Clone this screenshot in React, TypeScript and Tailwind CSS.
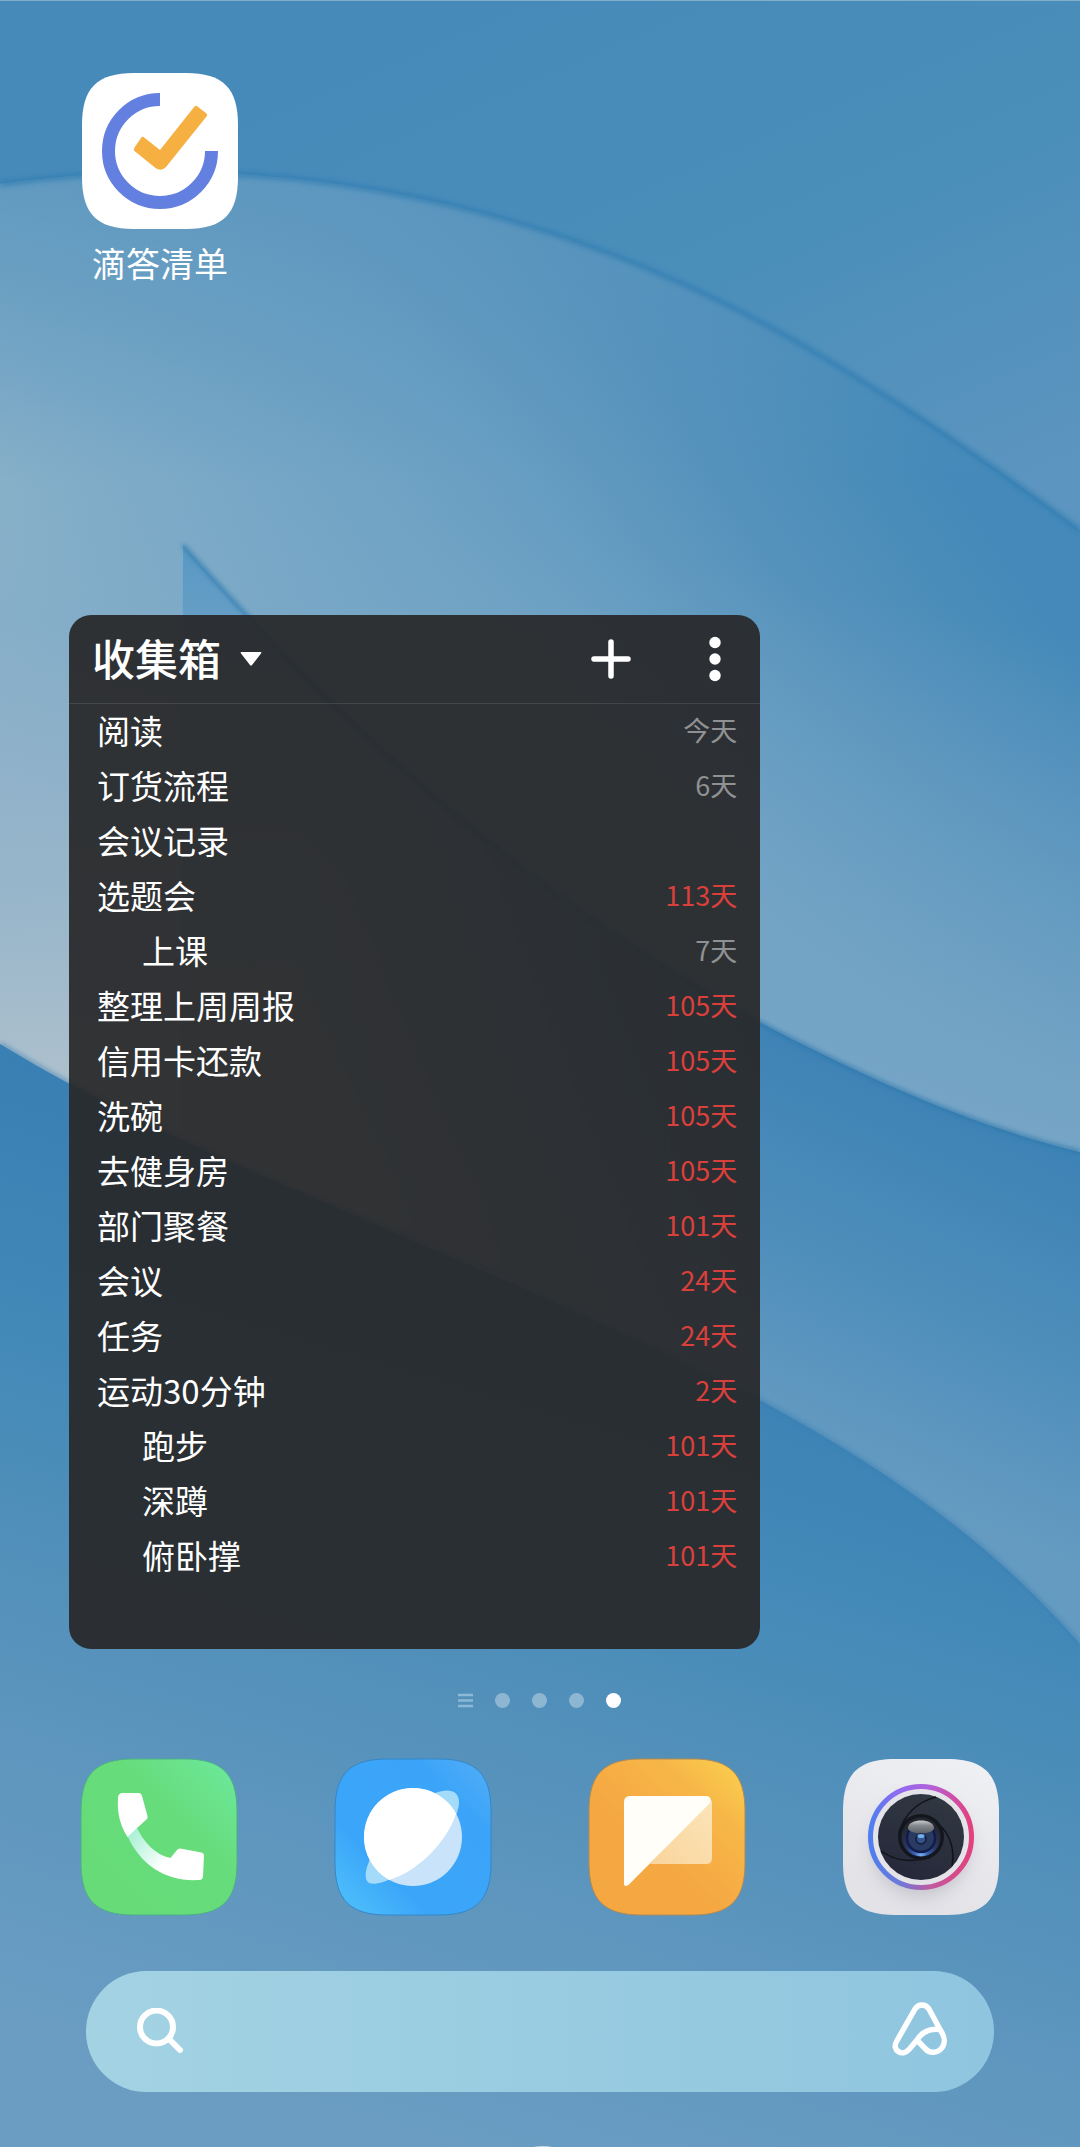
import type { ReactNode } from "react";

type Task = { title: string; due?: string; tone?: "muted" | "late"; child?: boolean };

const tasks: Task[] = [
  { title: "阅读", due: "今天", tone: "muted" },
  { title: "订货流程", due: "6天", tone: "muted" },
  { title: "会议记录" },
  { title: "选题会", due: "113天", tone: "late" },
  { title: "上课", due: "7天", tone: "muted", child: true },
  { title: "整理上周周报", due: "105天", tone: "late" },
  { title: "信用卡还款", due: "105天", tone: "late" },
  { title: "洗碗", due: "105天", tone: "late" },
  { title: "去健身房", due: "105天", tone: "late" },
  { title: "部门聚餐", due: "101天", tone: "late" },
  { title: "会议", due: "24天", tone: "late" },
  { title: "任务", due: "24天", tone: "late" },
  { title: "运动30分钟", due: "2天", tone: "late" },
  { title: "跑步", due: "101天", tone: "late", child: true },
  { title: "深蹲", due: "101天", tone: "late", child: true },
  { title: "俯卧撑", due: "101天", tone: "late", child: true },
];

const tile =
  "M0 52C0 15 15 0 52 0H104C141 0 156 15 156 52V104C156 141 141 156 104 156H52C15 156 0 141 0 104Z";

function Wallpaper() {
  const ridge = "M0 184C260 148 560 190 861 380C940 428 1010 478 1080 530";
  const horn = "M183 545C330 710 500 880 759 1022C870 1080 970 1125 1080 1152";
  const dune = "M0 1044C150 1135 300 1190 413 1241C530 1290 650 1345 758 1399C880 1465 990 1540 1080 1644";
  return (
    <svg
      className="absolute inset-0 -z-10 h-full w-full"
      viewBox="0 0 1080 2147"
      preserveAspectRatio="none"
      aria-hidden="true"
    >
      <defs>
        <linearGradient id="sky" gradientUnits="userSpaceOnUse" x1="500" y1="0" x2="760" y2="600">
          <stop offset="0" stopColor="#468ab9" />
          <stop offset="0.5" stopColor="#4a8eba" />
          <stop offset="1" stopColor="#5c95bf" />
        </linearGradient>
        <linearGradient id="band" gradientUnits="userSpaceOnUse" x1="60" y1="880" x2="860" y2="340">
          <stop offset="0" stopColor="#9ab8cb" />
          <stop offset="0.3" stopColor="#7dabc7" />
          <stop offset="0.6" stopColor="#6a9fc3" />
          <stop offset="0.8" stopColor="#5592bb" />
          <stop offset="1" stopColor="#4489b9" />
        </linearGradient>
        <linearGradient id="bandTop" gradientUnits="userSpaceOnUse" x1="0" y1="170" x2="0" y2="480">
          <stop offset="0" stopColor="#5a95be" stopOpacity="0.8" />
          <stop offset="1" stopColor="#5a95be" stopOpacity="0" />
        </linearGradient>
        <linearGradient id="bandLow" gradientUnits="userSpaceOnUse" x1="900" y1="600" x2="800" y2="1100">
          <stop offset="0" stopColor="#76a5c6" stopOpacity="0" />
          <stop offset="1" stopColor="#76a5c6" />
        </linearGradient>
        <linearGradient id="hornFill" gradientUnits="userSpaceOnUse" x1="180" y1="545" x2="180" y2="1200">
          <stop offset="0" stopColor="#5998c4" />
          <stop offset="0.5" stopColor="#8eb2c9" />
          <stop offset="1" stopColor="#a6b8c5" />
        </linearGradient>
        <linearGradient id="shade" gradientUnits="userSpaceOnUse" x1="1000" y1="1130" x2="850" y2="1470">
          <stop offset="0" stopColor="#3e83b5" />
          <stop offset="0.5" stopColor="#4e8ebb" />
          <stop offset="1" stopColor="#659bc1" />
        </linearGradient>
        <linearGradient id="fade" gradientUnits="userSpaceOnUse" x1="300" y1="0" x2="759" y2="0">
          <stop offset="0" stopColor="#fff" stopOpacity="0" />
          <stop offset="1" stopColor="#fff" />
        </linearGradient>
        <mask id="fadeMask" maskUnits="userSpaceOnUse" x="0" y="0" width="1080" height="2147">
          <rect width="1080" height="2147" fill="url(#fade)" />
        </mask>
        <linearGradient id="floor" gradientUnits="userSpaceOnUse" x1="680" y1="1290" x2="420" y2="2147">
          <stop offset="0" stopColor="#3a80b3" />
          <stop offset="0.25" stopColor="#4289b8" />
          <stop offset="0.5" stopColor="#5290ba" />
          <stop offset="0.75" stopColor="#6097bf" />
          <stop offset="1" stopColor="#6b9dc2" />
        </linearGradient>
        <linearGradient id="pale" gradientUnits="userSpaceOnUse" x1="0" y1="620" x2="0" y2="1080">
          <stop offset="0" stopColor="#adc0cd" stopOpacity="0" />
          <stop offset="1" stopColor="#adc0cd" />
        </linearGradient>
        <filter id="soft" x="-5%" y="-5%" width="110%" height="110%">
          <feGaussianBlur stdDeviation="2" />
        </filter>
      </defs>
      <rect width="1080" height="2147" fill="url(#sky)" />
      <path d={ridge + "V1500H0Z"} fill="url(#band)" />
      <path d={ridge + "V1500H0Z"} fill="url(#bandTop)" />
      <path d={ridge + "V1500H0Z"} fill="url(#bandLow)" />
      <path d={ridge} fill="none" stroke="#2e7ab0" strokeOpacity="0.6" strokeWidth="6" filter="url(#soft)" />
      <rect y="620" width="182" height="520" fill="url(#pale)" />
      <path d={horn + "V1700H180Z"} fill="url(#hornFill)" />
      <path d={horn + "V1700H180Z"} fill="url(#shade)" mask="url(#fadeMask)" />
      <path d={horn} fill="none" stroke="#2a75ab" strokeOpacity="0.7" strokeWidth="4" filter="url(#soft)" />
      <path d={dune + "V2147H0Z"} fill="url(#floor)" />
      <path d={dune} fill="none" stroke="#3a80b3" strokeOpacity="0.5" strokeWidth="5" filter="url(#soft)" />
      <rect width="1080" height="1" fill="#82aecb" />
      <ellipse cx="543" cy="2149" rx="13" ry="3" fill="#c4d9e7" />
    </svg>
  );
}

function AppTile({ label, children }: { label: string; children: ReactNode }) {
  return (
    <button type="button" aria-label={label} className="size-[156px] shrink-0">
      <svg viewBox="0 0 156 156" className="block size-full overflow-visible" aria-hidden="true">
        {children}
      </svg>
    </button>
  );
}

function TickIcon() {
  return (
    <>
      <path d={tile} fill="#fff" />
      <path d="M78 26.500A51.500 51.500 0 1 0 129.500 78" fill="none" stroke="#637fe0" strokeWidth="13" />
      <path
        d="M61.500 64L78 77L112.500 33.500Q114 32 115.500 33.500L124.500 40.500Q126 42 124.500 43.500L84 94Q79 99 73.500 95L52.500 78Q51 76.500 52.500 74.500L59 65Q60 63 61.500 64Z"
        fill="#f5b041"
      />
    </>
  );
}

function PhoneIcon() {
  return (
    <>
      <defs>
        <linearGradient id="green" x1="0.25" y1="0.8" x2="0.95" y2="0.1">
          <stop offset="0" stopColor="#66db78" />
          <stop offset="0.55" stopColor="#67dc7b" />
          <stop offset="1" stopColor="#6ce797" />
        </linearGradient>
        <linearGradient id="handle" gradientUnits="userSpaceOnUse" x1="48" y1="74" x2="88" y2="108">
          <stop offset="0" stopColor="#a5f0d2" />
          <stop offset="0.9" stopColor="#fff" />
        </linearGradient>
      </defs>
      <path d={tile} fill="url(#green)" stroke="#4dae8a" strokeWidth="1" />
      <path
        d="M46.500 77L55.500 68C63 84 75 96 89.500 99L96 91Q97 89.500 99 89.500L120.500 93.500Q123 94 123 96.500L122 117Q122 121 118 121C86 123 60 107 46.500 77Z"
        fill="url(#handle)"
      />
      <path
        d="M37 39Q37 34 42 34H57Q60.500 34 61 37L66.500 57Q67 59 65.500 60.500L56 69L46.500 78C39 66 36 54 37 39Z"
        fill="#fff"
      />
    </>
  );
}

function BrowserIcon() {
  return (
    <>
      <defs>
        <linearGradient id="blue" x1="0" y1="1" x2="1" y2="0">
          <stop offset="0" stopColor="#51c4fb" />
          <stop offset="0.3" stopColor="#3ba6f9" />
          <stop offset="0.75" stopColor="#3ba4f8" />
          <stop offset="1" stopColor="#53aef7" />
        </linearGradient>
        <clipPath id="globe">
          <circle cx="78" cy="78" r="49" />
        </clipPath>
      </defs>
      <path d={tile} fill="url(#blue)" stroke="#3586c8" strokeWidth="1" />
      <path
        d="M100 34C113 29 124 31 124 43C124 58 109 80 88 98C66 117 43 128 34 124C28 120 31 108 36 98Z"
        fill="#a3dbf9"
      />
      <circle cx="78" cy="78" r="49" fill="#c9e4fa" />
      <path
        d="M121 55C112 82 84 112 54 121C40 126 20 120 18 90V20H118Z"
        fill="#fff"
        clipPath="url(#globe)"
      />
    </>
  );
}

function MessageIcon() {
  return (
    <>
      <defs>
        <linearGradient id="amber" x1="0.45" y1="0.65" x2="1" y2="0.05">
          <stop offset="0" stopColor="#f5a742" />
          <stop offset="0.6" stopColor="#f7b748" />
          <stop offset="1" stopColor="#fbd04d" />
        </linearGradient>
        <linearGradient id="flap" x1="0" y1="1" x2="1" y2="0">
          <stop offset="0" stopColor="#fad49b" />
          <stop offset="1" stopColor="#fbe5b9" />
        </linearGradient>
      </defs>
      <path d={tile} fill="url(#amber)" stroke="#b08a55" strokeWidth="1" />
      <path d="M61 105L120 40Q123 41 123 44V99Q123 105 117 105Z" fill="url(#flap)" />
      <path d="M35 43Q35 37 41 37H117Q121 37 122 41L121 44L40 125.500Q37.500 128 35 126Z" fill="#fffef8" />
    </>
  );
}

function CameraIcon() {
  return (
    <>
      <defs>
        <linearGradient id="shell" x1="1" y1="0" x2="0.6" y2="1">
          <stop offset="0" stopColor="#f0f1f5" />
          <stop offset="1" stopColor="#e2e2e7" />
        </linearGradient>
        <linearGradient id="ringTop" x1="0" y1="0.6" x2="1" y2="0.6">
          <stop offset="0" stopColor="#4f7ef0" />
          <stop offset="0.25" stopColor="#8c6cf2" />
          <stop offset="0.6" stopColor="#b45fd8" />
          <stop offset="1" stopColor="#e3407d" />
        </linearGradient>
        <linearGradient id="ringBottom" x1="0" y1="0" x2="1" y2="0">
          <stop offset="0" stopColor="#4f7ef0" />
          <stop offset="0.3" stopColor="#6f78d8" />
          <stop offset="0.6" stopColor="#c25aa0" />
          <stop offset="1" stopColor="#e3407d" />
        </linearGradient>
        <linearGradient id="body" x1="0.7" y1="0" x2="0.3" y2="1">
          <stop offset="0" stopColor="#303841" />
          <stop offset="1" stopColor="#26283a" />
        </linearGradient>
        <linearGradient id="shine" x1="0" y1="0" x2="0" y2="1">
          <stop offset="0" stopColor="#c9cbce" />
          <stop offset="0.4" stopColor="#85898e" />
          <stop offset="1" stopColor="#5b6068" />
        </linearGradient>
        <radialGradient id="lens" cx="0.5" cy="0.95" r="0.8">
          <stop offset="0" stopColor="#7cb4f4" />
          <stop offset="0.2" stopColor="#3a62b8" />
          <stop offset="0.5" stopColor="#29365e" />
          <stop offset="1" stopColor="#23272f" />
        </radialGradient>
        <filter id="drop" x="-30%" y="-30%" width="160%" height="170%">
          <feGaussianBlur stdDeviation="8" />
        </filter>
      </defs>
      <path d={tile} fill="url(#shell)" />
      <circle cx="78" cy="88" r="50" fill="#a9a9b2" opacity="0.5" filter="url(#drop)" />
      <circle cx="78" cy="78" r="50" fill="#e3e3e8" />
      <path d="M27.500 78A50.500 50.500 0 0 1 128.500 78" fill="none" stroke="url(#ringTop)" strokeWidth="5" />
      <path d="M27.500 78A50.500 50.500 0 0 0 128.500 78" fill="none" stroke="url(#ringBottom)" strokeWidth="5" />
      <circle cx="78" cy="78" r="43" fill="url(#body)" />
      <g fill="none" stroke="#101218" strokeWidth="1.500">
        <path d="M56 74C61 56 74 43 93 38" />
        <path d="M94 64C107 74 112 90 109 107" />
        <path d="M38 92C52 102 70 104 88 98" />
      </g>
      <circle cx="78" cy="78" r="23" fill="#14161d" />
      <circle cx="78" cy="78" r="19.500" fill="url(#lens)" />
      <circle cx="78" cy="79" r="14" fill="#2a3b63" stroke="#111c4c" strokeWidth="2.500" />
      <path d="M65 69C65 59 91 59 91 69C91 76 65 76 65 69Z" fill="url(#shine)" />
      <circle cx="78" cy="80" r="5" fill="#31548f" stroke="#141d33" strokeWidth="1.500" />
      <ellipse cx="78" cy="77" rx="3.500" ry="2" fill="#6fb0ea" />
    </>
  );
}

export default function App() {
  return (
    <main
      className="relative isolate flex min-h-screen flex-col overflow-hidden pt-[73px] pb-[55px] text-white"
      style={{ fontFamily: '"Noto Sans CJK SC", sans-serif' }}
    >
      <Wallpaper />

      <div className="ml-[82px] flex w-[156px] flex-col items-center">
        <AppTile label="滴答清单">
          <TickIcon />
        </AppTile>
        <span className="mt-[10px] text-[34px] leading-[48px] whitespace-nowrap">滴答清单</span>
      </div>

      <section className="mt-[328px] ml-[69px] w-[64%] rounded-[22px] bg-[#282829]/93 pb-[65px]">
        <header className="flex h-[89px] items-center border-b border-white/10 pr-[25px] pl-[23px]">
          <label className="relative flex items-center">
            <select
              aria-label="清单"
              className="w-[172px] appearance-none bg-transparent pb-1 text-[43px] leading-[56px] font-medium text-white"
            >
              <option>收集箱</option>
            </select>
            <svg viewBox="0 0 22 14" className="pointer-events-none absolute right-0.5 h-[14px] w-[22px]" aria-hidden="true">
              <path d="M1.500 0H20.500Q22 0 21 1.500L12 13Q11 14.500 10 13L1 1.500Q0 0 1.500 0Z" fill="#fff" />
            </svg>
          </label>
          <button type="button" aria-label="添加任务" className="ml-auto">
            <svg viewBox="0 0 40 40" className="block size-10" aria-hidden="true">
              <path d="M20 3V37M3 20H37" stroke="#fff" strokeWidth="5.500" strokeLinecap="round" />
            </svg>
          </button>
          <button type="button" aria-label="更多" className="ml-16">
            <svg viewBox="0 0 40 46" className="block h-[46px] w-10" aria-hidden="true">
              <circle cx="20" cy="6.500" r="5.700" fill="#fff" />
              <circle cx="20" cy="23" r="5.700" fill="#fff" />
              <circle cx="20" cy="39.500" r="5.700" fill="#fff" />
            </svg>
          </button>
        </header>
        <ul className="pr-[23px] pl-7">
          {tasks.map((task) => (
            <li
              key={task.title}
              className={
                task.child
                  ? "flex h-[55px] items-center justify-between pb-[3px] pl-[45px]"
                  : "flex h-[55px] items-center justify-between pb-[3px]"
              }
            >
              <span className="text-[33px] leading-[48px]">{task.title}</span>
              {task.due && (
                <span
                  className={
                    task.tone === "late"
                      ? "text-[27px] leading-10 text-[#d9403b]"
                      : "text-[27px] leading-10 text-[#8f9193]"
                  }
                >
                  {task.due}
                </span>
              )}
            </li>
          ))}
        </ul>
      </section>

      <nav aria-label="页面" className="mt-[44px] flex items-center justify-center gap-[22px] pr-[2px]">
        <svg viewBox="0 0 15 15" className="size-[15px]" aria-hidden="true">
          <path d="M0 2H15M0 7.500H15M0 13H15" stroke="#8db9d6" strokeWidth="2.600" />
        </svg>
        <button type="button" aria-label="第1页" className="size-[15px] rounded-full bg-white/35" />
        <button type="button" aria-label="第2页" className="size-[15px] rounded-full bg-white/35" />
        <button type="button" aria-label="第3页" className="size-[15px] rounded-full bg-white/35" />
        <button type="button" aria-label="第4页" aria-current="page" className="size-[15px] rounded-full bg-white" />
      </nav>

      <div className="mt-[51px] flex justify-between px-[81px]">
        <AppTile label="电话">
          <PhoneIcon />
        </AppTile>
        <AppTile label="浏览器">
          <BrowserIcon />
        </AppTile>
        <AppTile label="短信">
          <MessageIcon />
        </AppTile>
        <AppTile label="相机">
          <CameraIcon />
        </AppTile>
      </div>

      <form
        role="search"
        className="mx-[86px] mt-14 flex h-[121px] items-center rounded-full bg-linear-to-r from-[#a3d3e3] to-[#8fc5df] pr-[45px] pl-[50px]"
      >
        <label htmlFor="query" className="shrink-0">
          <svg viewBox="0 0 48 48" className="block size-12" aria-label="搜索">
            <circle cx="20.500" cy="19" r="16.500" fill="none" stroke="#fff" strokeWidth="6" />
            <path d="M33 31L44 42" stroke="#fff" strokeWidth="6" strokeLinecap="round" />
          </svg>
        </label>
        <input
          id="query"
          type="search"
          className="h-full min-w-0 flex-1 appearance-none bg-transparent px-4 text-[33px] outline-none"
        />
        <button type="button" aria-label="语音助手" className="shrink-0">
          <svg viewBox="0 3 60 60" className="block size-[60px]" aria-hidden="true">
            <path
              d="M28 41C33 33 40 29 51 30.500L40 10C36.500 4.500 29.500 4.500 26 10L7.500 42.500C2.500 51.500 13.500 58 20 50.500L28 41L36 49.500C41 55 49 54.500 53.500 48C57 42 55.500 37 51 30.500"
              fill="none"
              stroke="#fff"
              strokeWidth="5.500"
              strokeLinejoin="round"
              strokeLinecap="round"
            />
          </svg>
        </button>
      </form>
    </main>
  );
}
